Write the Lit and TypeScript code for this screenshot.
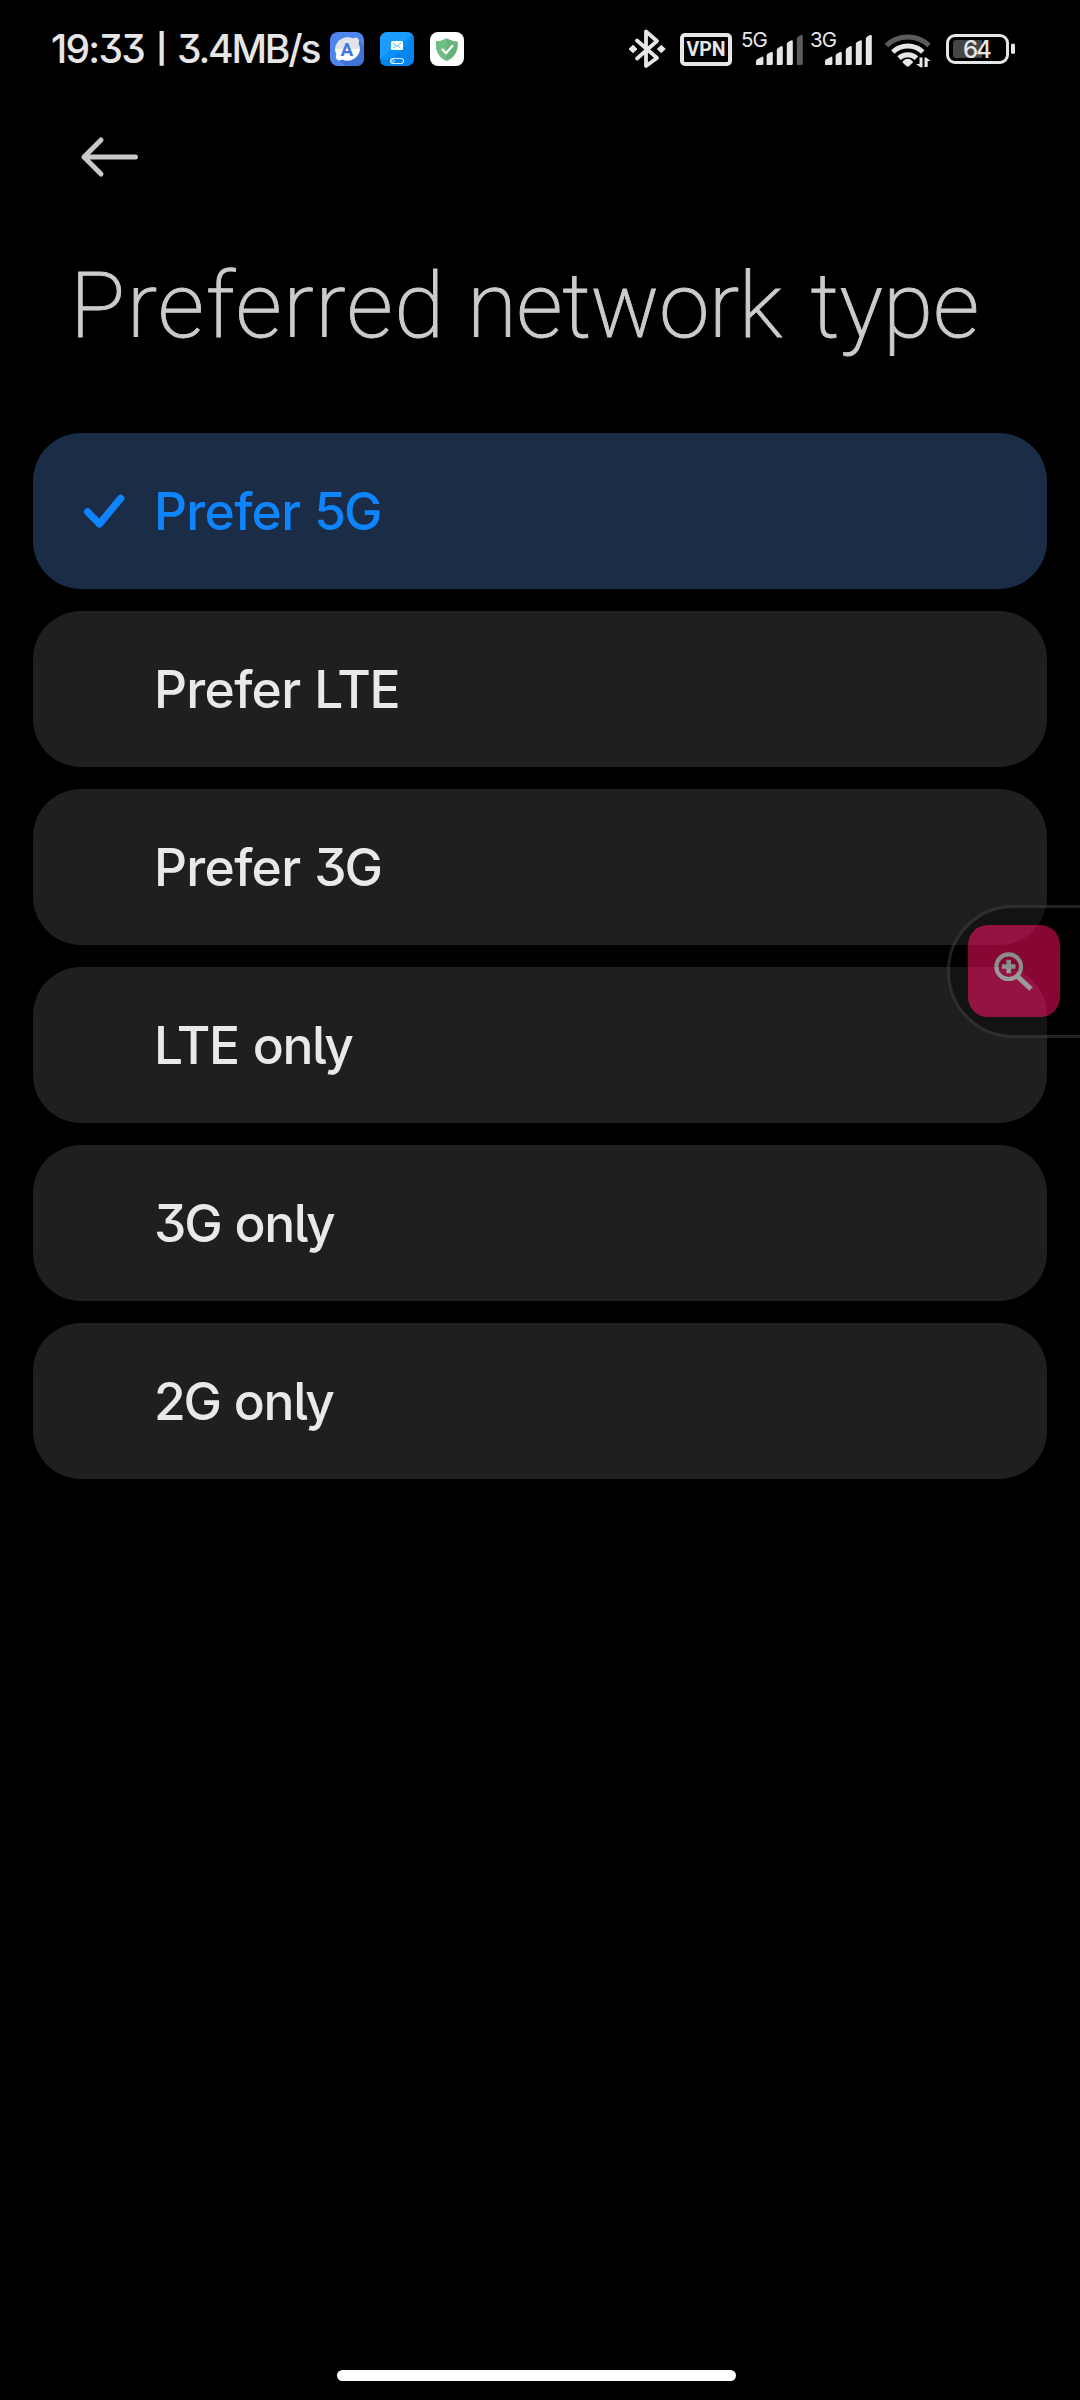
import { LitElement, html, svg, css } from "lit";
import { customElement, property, state } from "lit/decorators.js";
import { classMap } from "lit/directives/class-map.js";

const signalBars = (x: number, dimLast: boolean) => svg`
  <path d="M${x} 65v-3.5q0-1.5 1.2-2.2l4.4-2.4q1.8-.9 1.8 1v5.6q0 1.5-1.5 1.5z"/>
  <path d="M${x + 10.6} 65v-9q0-1.6 1.2-2.3l3.2-1.6q1.8-.7 1.8 1.1v10.3q0 1.5-1.5 1.5z"/>
  <path d="M${x + 20.8} 65v-14.8q0-1.6 1.2-2.3l3-1.6q1.8-.7 1.8 1.1v16.1q0 1.5-1.5 1.5z"/>
  <path d="M${x + 30.8} 65v-20.6q0-1.6 1.2-2.3l3-1.6q1.8-.7 1.8 1.1v21.9q0 1.5-1.5 1.5z"/>
  <path fill=${dimLast ? "#5c5c5c" : "#e6e6e6"} d="M${x + 40.8} 65v-26q0-1.6 1.2-2.3l3-1.6q1.8-.7 1.8 1.1v27.3q0 1.5-1.5 1.5z"/>`;

@customElement("status-bar")
class StatusBar extends LitElement {
  static styles = css`
    :host { display: flex; height: 98px; padding: 0 63px 0 51px; color: #e6e6e6; font-family: Inter, sans-serif; }
    svg { display: block; fill: #e6e6e6; flex: none; }
    .left, .right, .info { display: flex; align-items: center; white-space: nowrap; }
    .left { flex: 1; }
    .info { width: 279px; font-size: 39px; font-weight: 500; font-feature-settings: "cv09"; line-height: 98px; }
    .time { letter-spacing: -1.7px; }
    .sep { margin: 0 10px 0 12px; font-size: 29px; font-weight: 700; }
    .rate { letter-spacing: -2.2px; }
    .line { fill: none; stroke: #e6e6e6; }
    .badge { font: 700 19px Roboto, sans-serif; fill: #3f78e0; }
    .vpn { box-sizing: border-box; width: 52px; height: 33px; margin: 1px 9px 0 14px; border: 4px solid #e6e6e6; border-radius: 5px;
      display: flex; align-items: center; justify-content: center; font: 700 19.5px/24px Roboto, sans-serif; }
    .gen { width: 15px; font-size: 20.5px; letter-spacing: -1px; line-height: 20px; align-self: flex-start; padding-top: 30px; }
    .second { margin-left: 6px; }
    .level { font: 500 24px Inter, sans-serif; letter-spacing: -2px; }
  `;
  render() {
    return html`
      <div class="left">
        <div class="info"><span class="time">19:33</span><span class="sep">|</span><span class="rate">3.4MB/s</span></div>
        <svg width="134" height="98" viewBox="330 0 134 98">
          <rect x="330" y="32" width="34" height="34" rx="8" fill="#4f86ec"/>
          <path d="M339 60l7 6h10q8 0 8-8V47l-6-9z" fill="#3f74d6"/>
          <path d="M335 49a12.500 12.500 0 0 1 18-10.500q3-2 5 0t.5 5q1.500 3 1.500 6z" fill="#e2e4e8"/>
          <path d="M360 49a12.500 12.500 0 0 1-18 10.500q-3 2-5 0t-.5-5q-1.500-3-1.500-5.500z" fill="#fff"/>
          <text class="badge" x="347" y="55.800" text-anchor="middle">A</text>
          <rect x="380" y="32" width="34" height="34" rx="8" fill="#0690fb"/>
          <path d="M380 62q22-6 33-27q1 2 1 5v18q0 8-8 8h-18q-6 0-8-4z" fill="#0484ee"/>
          <path d="M380 40q0-8 8-8h18q5 0 7 3q-12 7-33 24z" fill="#1d9cff"/>
          <rect x="391" y="41" width="12" height="9" rx="1.500" fill="#fff"/>
          <path d="M393 43l4 3.300 4-3.300M393.500 48.300l2-2M400.500 48.300l-2-2" class="line" style="stroke:#3b9df0;stroke-width:.9"/>
          <rect x="390.500" y="58.500" width="13" height="5" rx="2.500" class="line" style="stroke:#d8efff;stroke-width:1.100"/>
          <circle cx="393" cy="61" r="1.400" class="line" style="stroke:#d8efff;stroke-width:.8"/>
          <rect x="430" y="32" width="34" height="34" rx="8" fill="#fff"/>
          <path d="M436 41.500q6-.5 10.700-3 5 2.500 11 3 1.300 14-11 19.500-12-5.500-10.700-19.500z" fill="#67b279"/>
          <path d="M436 41.500q6-.5 10.700-3V61q-12-5.500-10.700-19.500z" fill="#71be84"/>
          <path d="M442 49l4 4.200 7-8" class="line" style="stroke:#fff;stroke-width:2.200"/>
        </svg>
      </div>
      <div class="right">
        <svg width="38" height="98" viewBox="628 0 38 98">
          <path class="line" stroke-width="3.800" stroke-linecap="round" stroke-linejoin="round" d="M637 40.500l20 17.500-11 8V31.500l11 9.500-20 17.500"/>
          <path d="M633 45.300l4 3.700-4 3.700-4-3.700zM661.300 45.300l4 3.700-4 3.700-4-3.700z" stroke="#e6e6e6" stroke-linejoin="round"/>
        </svg>
        <div class="vpn">VPN</div>
        <div class="gen">5G</div>
        <svg width="48" height="98" viewBox="756 0 48 98">${signalBars(756, true)}</svg>
        <div class="gen second">3G</div>
        <svg width="47" height="98" viewBox="825 0 47 98">${signalBars(825, false)}</svg>
        <svg width="145" height="98" viewBox="872 0 145 98">
          <g class="line" stroke-width="5">
            <path d="M886.500 45.500a31 31 0 0 1 42.500 0" style="stroke:#5c5c5c"/>
            <path d="M892.800 52a22 22 0 0 1 30 0"/>
            <path d="M899 58.200a13 13 0 0 1 17.500 0"/>
          </g>
          <path d="M903 61q4.800-4.500 9.500 0l.5 1.500-4 3.700q-1.200.8-2.500 0l-4-3.700z"/>
          <path d="M919.500 57.500v6.500h-3.500l4.500 3.200h2v-9.700zM924.500 67v-9.500h1.800l4.200 3.500h-2.800v6z"/>
          <rect class="line" x="947.500" y="35.500" width="60" height="27" rx="7.500" stroke-width="3"/>
          <path d="M956 40h26v18h-26q-3 0-3-3V43q0-3 3-3z" fill="#454545"/>
          <rect x="1011" y="43.500" width="4" height="10.500" rx="1.800"/>
          <text class="level" x="963" y="58.200">64</text>
        </svg>
      </div>`;
  }
}

@customElement("network-option")
class NetworkOption extends LitElement {
  @property() label = "";
  @property({ type: Boolean }) selected = false;
  static styles = css`
    :host { display: block; }
    .card { display: flex; align-items: center; height: 156px; border-radius: 48px; background: #1f1f1f; color: #e9e9e9;
      font: 500 51.5px/62px Inter, sans-serif; font-feature-settings: "cv09", "cv05"; }
    .card.on { background: #1a2c46; color: #0e84ff; }
    .mark { width: 73px; margin-left: 48px; height: 60px; }
    .mark svg { display: block; }
    .text { display: flex; gap: 14px; white-space: nowrap; }
    .prefer { letter-spacing: -0.7px; }
    .lte { letter-spacing: -1.4px; }
    .only { letter-spacing: -1.4px; }
    .gen { letter-spacing: -2.2px; }
  `;
  render() {
    const kind = (w: string) => (w === "Prefer" ? "prefer" : w === "LTE" ? "lte" : w === "only" ? "only" : "gen");
    return html`<div class=${classMap({ card: true, on: this.selected })}>
      <div class="mark">${this.selected
        ? html`<svg width="60" height="60" viewBox="81 481 60 60"><path d="M87.500 511.800l12 12.200 21.200-25.700" fill="none" stroke="#0e84ff" stroke-width="7.200" stroke-linecap="round" stroke-linejoin="round"/></svg>`
        : ""}</div>
      <div class="text">${this.label.split(" ").map((w) => html`<span class=${kind(w)}>${w}</span>`)}</div>
    </div>`;
  }
}

@customElement("app-root")
class AppRoot extends LitElement {
  @state() selected = "Prefer 5G";
  private options = ["Prefer 5G", "Prefer LTE", "Prefer 3G", "LTE only", "3G only", "2G only"];
  static styles = css`
    :host { display: flex; flex-direction: column; box-sizing: border-box; position: relative; width: 1080px; height: 2400px; background: #000; overflow: hidden; }
    .back { display: block; padding: 32px 0 0 76px; }
    h1 { display: flex; margin: 0; padding: 67px 0 72px 70px; font: 200 91px/110px Roboto, sans-serif; color: #cbcbcb; white-space: nowrap; -webkit-text-stroke: 0.9px #cbcbcb; }
    .w1 { letter-spacing: 1.5px; margin-right: 21px; }
    .w2 { letter-spacing: -0.5px; margin-right: 28.600px; }
    .list { display: flex; flex-direction: column; gap: 22px; padding: 0 33px; }
    .home { width: 399px; height: 11px; margin: auto auto 19px 337px; border-radius: 5.500px; background: #fff; }
    .zoom { position: absolute; box-sizing: border-box; left: 947px; top: 905px; width: 140px; height: 133px; padding: 17px 0 0 18px;
      border: 3px solid #3c3c3c; border-radius: 66px 0 0 66px; background: rgba(0, 0, 0, 0.65); background-clip: padding-box; opacity: 0.55; }
    .tile { width: 92px; height: 92px; border-radius: 20px; background: #f50b60; }
    .tile svg { display: block; }
  `;
  render() {
    return html`
      <status-bar></status-bar>
      <svg class="back" width="70" height="54" viewBox="76 130 70 54" fill="none" stroke="#c9c9c9" stroke-width="5" stroke-linecap="round" stroke-linejoin="round">
        <path d="M101 140L84 157l17 17M84 157h51.500"/>
      </svg>
      <h1><span class="w1">Preferred</span><span class="w2">network</span><span>type</span></h1>
      <div class="list">
        ${this.options.map((o) => html`<network-option .label=${o} .selected=${o === this.selected} @click=${() => (this.selected = o)}></network-option>`)}
      </div>
      <div class="home"></div>
      <div class="zoom"><div class="tile">
        <svg width="92" height="92" viewBox="968 925 92 92" fill="none" stroke="#fff">
          <circle cx="1008.700" cy="966.700" r="12.300" stroke-width="4.200"/>
          <path d="M1001.900 966.500h13.600M1008.700 959.700v13.600" stroke-width="4.500"/>
          <path d="M1016.500 975.500l14.500 13.500" stroke-width="5"/>
        </svg>
      </div></div>`;
  }
}
